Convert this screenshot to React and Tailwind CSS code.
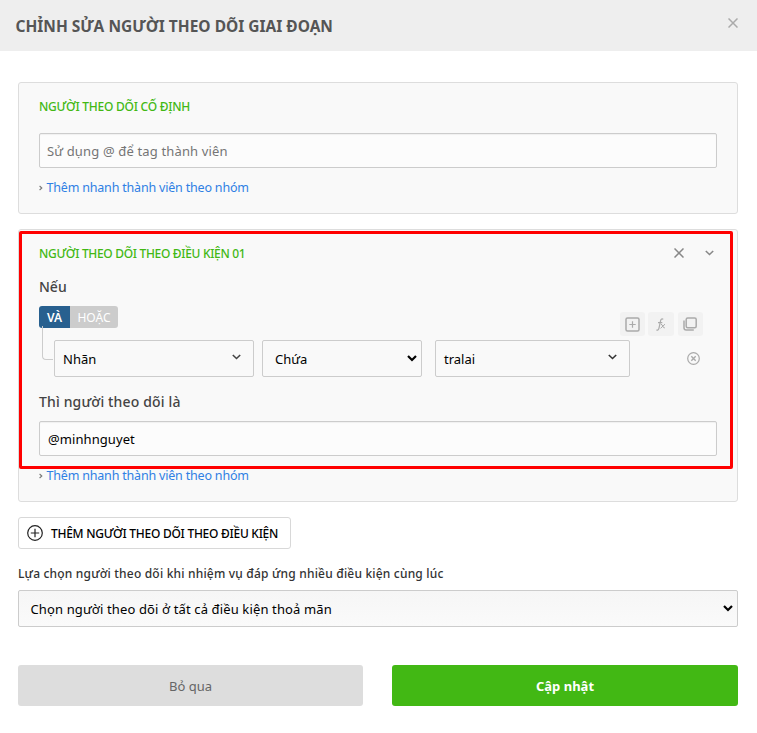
const FONT = "font-['Noto_Sans','Open_Sans',sans-serif]";

function Cross({ className, size, width = 1.5 }) {
  return (
    <svg className={className} width={size} height={size} viewBox={`0 0 ${size} ${size}`} fill="none" stroke="currentColor" strokeWidth={width}>
      <path d={`M0.5 0.5L${size - 0.5} ${size - 0.5}M${size - 0.5} 0.5L0.5 ${size - 0.5}`} />
    </svg>
  );
}

function ThinChevron({ className }) {
  return (
    <svg className={className} width="9" height="6" viewBox="0 0 9 6" fill="none" stroke="currentColor" strokeWidth="1.6">
      <path d="M0.8 1L4.5 4.5L8.2 1" />
    </svg>
  );
}

function BoldChevron({ className }) {
  return (
    <svg className={className} width="10" height="7" viewBox="0 0 10 7" fill="none" stroke="currentColor" strokeWidth="2.2">
      <path d="M1 1L5 5L9 1" />
    </svg>
  );
}

function QuickAdd() {
  return (
    <a className="flex h-[18px] items-center text-[12.5px] leading-[18px] text-[#2f80e4]">
      <svg className="mt-px mr-[3.5px] text-[#777]" width="4" height="6" viewBox="0 0 4 6" fill="none" stroke="currentColor" strokeWidth="1.1">
        <path d="M0.6 1L2.8 3L0.6 5" />
      </svg>
      <span className="pt-[2px] tracking-[-0.19px] whitespace-nowrap">Thêm nhanh thành viên theo nhóm</span>
    </a>
  );
}

const inputBox =
  "flex h-[35px] items-center rounded-[2px] border border-[#ccc] bg-[#fcfcfc] pt-[2px] text-[13px] shadow-[inset_0_1px_1px_rgba(0,0,0,0.05)]";
const selectBox = "flex h-[37px] items-center justify-between rounded-[2px] border border-[#ccc] text-[13px] text-black";
const iconBox = "flex h-6 items-center justify-center rounded-[3px] bg-[#f2f2f2] text-[#aaa]";

export default function App() {
  return (
    <div className={`h-[733px] w-[757px] overflow-hidden bg-white ${FONT}`}>
      <header className="flex h-[51px] items-center justify-between bg-[#eee] pr-[19px] pl-[15.5px]">
        <h1 className="pt-[3px] text-[15.5px] font-bold whitespace-nowrap text-[#555]">CHỈNH SỬA NGƯỜI THEO DÕI GIAI ĐOẠN</h1>
        <Cross size={10} className="mb-[5px] text-[#aaa]" />
      </header>

      <main className="px-[18px] pt-[31px]">
        <section className="h-[132px] w-[720px] rounded-[3px] border border-[#ddd] bg-[#f9f9f9] px-5 pt-[15px]">
          <h2 className="h-[18px] text-[12px] leading-[18px] font-medium tracking-[-0.25px] whitespace-nowrap text-[#42b814]">
            NGƯỜI THEO DÕI CỐ ĐỊNH
          </h2>
          <div className={`mt-[17px] pl-[7px] text-[#757575] ${inputBox}`}>
            <span className="tracking-[0.15px] whitespace-nowrap">Sử dụng @ để tag thành viên</span>
          </div>
          <div className="mt-[10px]">
            <QuickAdd />
          </div>
        </section>

        <section className="relative mt-[15px] h-[273px] w-[720px] rounded-[3px] border border-[#ddd] bg-[#f9f9f9] px-5 pt-[15px]">
          <div className="flex h-[18px] items-center justify-between pr-[3px]">
            <h2 className="text-[12px] leading-[18px] font-medium tracking-[-0.32px] whitespace-nowrap text-[#42b814]">
              NGƯỜI THEO DÕI THEO ĐIỀU KIỆN 01
            </h2>
            <div className="flex items-center gap-[21px] text-[#888]">
              <Cross size={10} width={1.5} className="mb-[2px]" />
              <ThinChevron className="mb-[2px]" />
            </div>
          </div>
          <div className="mt-[14px] h-5 text-[14px] leading-5 font-medium text-[#444]">Nếu</div>
          <div className="flex h-[43px] justify-between pt-[9px] pr-[14px]">
            <div className="flex h-[22px] text-[12px] leading-[23px] text-white">
              <span className="w-[31px] rounded-l-[3px] bg-[#28608f] text-center font-semibold">VÀ</span>
              <span className="w-12 rounded-r-[3px] bg-[#ccc] text-center">HOẶC</span>
            </div>
            <div className="mt-[6px] flex h-6">
              <div className={`w-[25px] ${iconBox}`}>
                <svg width="15" height="15" viewBox="0 0 15 15" fill="none" stroke="currentColor" strokeWidth="1.5">
                  <rect x="1" y="1" width="13" height="13" rx="1.5" />
                  <path d="M4.3 7.5h6.4M7.5 4.3v6.4" strokeWidth="1.2" />
                </svg>
              </div>
              <div className={`ml-[3px] w-[26px] ${iconBox}`}>
                <svg width="10" height="13" viewBox="0 0 10 13" fill="none" stroke="currentColor" strokeWidth="1.2">
                  <path d="M7.2 1.4C6.2 .3 5 .8 4.6 2.7L3 10.2C2.6 12 1.5 12.5 .5 11.7M2 4.7H6.3" />
                  <path d="M5 6.3C6.6 5.8 6.9 10.6 8.8 9.9M9 6.2L4.6 10.3" strokeWidth="1" />
                </svg>
              </div>
              <div className={`ml-1 w-[25px] pr-px ${iconBox}`}>
                <svg width="14" height="14" viewBox="0 0 14 14" fill="none" stroke="currentColor" strokeWidth="1.5">
                  <rect x="3.2" y="1" width="10" height="9.7" rx="1.5" />
                  <path d="M1 3.5V10.7Q1 13 3.3 13H10.8" />
                </svg>
              </div>
            </div>
          </div>
          <div className="flex items-center">
            <div className="relative h-[37px] w-[15px]">
              <div className="absolute -top-[14px] left-[3px] h-[34px] w-[11px] rounded-bl-[4px] border-b border-l border-[#ccc]" />
            </div>
            <div className={`w-[200px] pr-3 pl-2 ${selectBox}`}>
              <span className="pt-[2px]">Nhãn</span>
              <ThinChevron className="mb-[4px] text-[#444]" />
            </div>
            <div className={`ml-2 w-40 pr-1 pl-3 ${selectBox}`}>
              <span className="pt-[2px]">Chứa</span>
              <BoldChevron />
            </div>
            <div className={`ml-[13px] w-[195px] pr-3 pl-2 ${selectBox}`}>
              <span className="pt-[2px]">tralai</span>
              <ThinChevron className="mb-[4px] text-[#333]" />
            </div>
            <svg className="mb-px ml-[57px] text-[#aaa]" width="13" height="13" viewBox="0 0 13 13" fill="none" stroke="currentColor" strokeWidth="1.2">
              <circle cx="6.5" cy="6.5" r="5.8" />
              <path d="M4.3 4.3L8.7 8.7M8.7 4.3L4.3 8.7" strokeWidth="1.4" />
            </svg>
          </div>
          <div className="mt-[15px] h-5 text-[14px] leading-5 font-medium tracking-[0.15px] whitespace-nowrap text-[#444]">Thì người theo dõi là</div>
          <div className={`mt-[9px] pl-2 tracking-[0.08px] text-black ${inputBox}`}>@minhnguyet</div>
          <div className="mt-[10px]">
            <QuickAdd />
          </div>
          <div className="absolute top-[1px] left-0 h-[238px] w-[714px] rounded-[2px] border-[3px] border-[#f00]" />
        </section>

        <button className="mt-[15px] flex h-8 w-[273px] items-center rounded-[3px] border border-[#d8d8d8] bg-white pl-2">
          <svg width="16" height="16" viewBox="0 0 16 16" fill="none" stroke="#222" strokeWidth="1.2">
            <circle cx="8" cy="8" r="7.3" />
            <path d="M3.8 8h8.4M8 3.8v8.4" />
          </svg>
          <span className="ml-2 pt-px text-[12px] font-medium tracking-[-0.27px] whitespace-nowrap text-black">THÊM NGƯỜI THEO DÕI THEO ĐIỀU KIỆN</span>
        </button>

        <div className="mt-4 h-[18px] text-[12px] leading-[18px] font-medium tracking-[0.19px] whitespace-nowrap text-[#333]">
          Lựa chọn người theo dõi khi nhiệm vụ đáp ứng nhiều điều kiện cùng lúc
        </div>
        <div className={`mt-[7px] w-[720px] bg-linear-to-b from-[#f6f6f6] to-[#fafafa] pr-1 pl-[11.5px] ${selectBox}`}>
          <span className="pt-[2px] tracking-[0.13px] whitespace-nowrap">Chọn người theo dõi ở tất cả điều kiện thoả mãn</span>
          <BoldChevron />
        </div>

        <div className="mt-[38px] flex gap-[29px]">
          <button className="h-[41px] w-[345px] rounded-[3px] bg-[#ddd] pt-[2px] text-[13px] text-[#666]">Bỏ qua</button>
          <button className="h-[41px] w-[346px] rounded-[3px] bg-[#42b814] pt-[2px] text-[13px] font-bold text-white">Cập nhật</button>
        </div>
      </main>
    </div>
  );
}
